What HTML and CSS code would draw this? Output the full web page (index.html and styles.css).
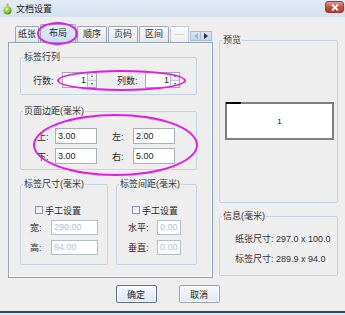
FILE: index.html
```html
<!DOCTYPE html>
<html>
<head>
<meta charset="utf-8">
<title>文档设置</title>
<link rel="stylesheet" href="styles.css">
</head>
<body>
<div class="window">
  <div class="titlebar">
    <svg class="app-icon" width="9" height="12" viewBox="0 0 9 12">
      <defs>
        <radialGradient id="g1" cx="0.4" cy="0.35" r="0.7">
          <stop offset="0" stop-color="#e6f7a0"/>
          <stop offset="0.5" stop-color="#8fcb2a"/>
          <stop offset="1" stop-color="#3f8a12"/>
        </radialGradient>
      </defs>
      <rect x="3.5" y="0.5" width="2" height="3" fill="#d9b13a"/>
      <circle cx="4.5" cy="7.5" r="4" fill="url(#g1)"/>
    </svg>
    <span class="title">文档设置</span>
    <div class="close">
      <svg width="8" height="7" viewBox="0 0 8 7"><path d="M1 0.5 L7 6.5 M7 0.5 L1 6.5" stroke="#fff" stroke-width="1.8"/></svg>
    </div>
  </div>

  <div class="content">
    <div class="left">
      <div class="tabs">
        <div class="tab tab-first">纸张</div>
        <div class="tab active">布局</div>
        <div class="tab">顺序</div>
        <div class="tab">页码</div>
        <div class="tab">区间</div>
        <div class="tab more">—</div>
        <div class="tab-arrows">
          <span class="arr">
            <svg width="4" height="6" viewBox="0 0 4 6"><path d="M4 0 L0 3 L4 6Z" fill="#a7b3c4"/></svg>
          </span>
          <span class="arr">
            <svg width="4" height="6" viewBox="0 0 4 6"><path d="M0 0 L4 3 L0 6Z" fill="#2b2b2b"/></svg>
          </span>
        </div>
      </div>
      <div class="panel">
        <fieldset class="fs fs-rc">
          <legend>标签行列</legend>
          <div class="rc-row">
            <span class="lbl">行数:</span>
            <div class="spinner"><span class="val">1</span><div class="spin"><i class="up"></i><i class="dn"></i></div></div>
            <span class="lbl lbl-col">列数:</span>
            <div class="spinner"><span class="val">1</span><div class="spin"><i class="up"></i><i class="dn"></i></div></div>
          </div>
        </fieldset>

        <fieldset class="fs fs-margin">
          <legend>页面边距(毫米)</legend>
          <div class="m-rows">
            <div class="m-row">
              <span class="m-lbl">上:</span><span class="inp">3.00</span>
              <span class="m-lbl m-lbl2">左:</span><span class="inp">2.00</span>
            </div>
            <div class="m-row">
              <span class="m-lbl">下:</span><span class="inp">3.00</span>
              <span class="m-lbl m-lbl2">右:</span><span class="inp">5.00</span>
            </div>
          </div>
        </fieldset>

        <div class="pair">
          <fieldset class="fs fs-size">
            <legend>标签尺寸(毫米)</legend>
            <div class="chk-row"><span class="chk"></span><span>手工设置</span></div>
            <div class="d-row"><span class="d-lbl">宽:</span><span class="inp dis">290.00</span></div>
            <div class="d-row"><span class="d-lbl">高:</span><span class="inp dis">94.00</span></div>
          </fieldset>
          <fieldset class="fs fs-gap">
            <legend>标签间距(毫米)</legend>
            <div class="chk-row"><span class="chk"></span><span>手工设置</span></div>
            <div class="d-row"><span class="d-lbl">水平:</span><span class="inp dis">0.00</span></div>
            <div class="d-row"><span class="d-lbl">垂直:</span><span class="inp dis">0.00</span></div>
          </fieldset>
        </div>
      </div>
    </div>

    <div class="right">
      <fieldset class="fs fs-preview">
        <legend>预览</legend>
        <div class="preview"><span>1</span></div>
      </fieldset>
      <fieldset class="fs fs-info">
        <legend>信息(毫米)</legend>
        <div class="info-line">纸张尺寸: 297.0 x 100.0</div>
        <div class="info-line">标签尺寸: 289.9 x 94.0</div>
      </fieldset>
    </div>
  </div>

  <div class="buttons">
    <button class="btn btn-default">确定</button>
    <button class="btn">取消</button>
  </div>

  <div class="bottom-bar"></div>

  <div class="mark mark-tab"></div>
  <div class="mark mark-rc"></div>
  <div class="mark mark-margin"></div>
</div>
</body>
</html>
```

FILE: styles.css
```css
* { box-sizing: border-box; }

body {
  margin: 0;
  width: 345px;
  height: 315px;
  overflow: hidden;
  background: #eeeeee;
  font-family: "Liberation Sans", "Noto Sans CJK SC", sans-serif;
  font-size: 9px;
  color: #2a2a2a;
}

.window {
  position: relative;
  height: 315px;
  display: flex;
  flex-direction: column;
}

/* title bar */
.titlebar {
  height: 17px;
  display: flex;
  align-items: center;
  padding-left: 3px;
  background: linear-gradient(#e2ebf6, #d4e1f0);
}
.app-icon { display: block; }
.title { margin-left: 4px; font-size: 9px; color: #1b1b1b; }
.close {
  margin-left: auto;
  margin-right: 1px;
  width: 19px;
  height: 12px;
  border: 1px solid #9a3d33;
  border-radius: 3px;
  background: linear-gradient(#e49a8e, #c9493a 55%, #b83a2c);
  display: flex;
  align-items: center;
  justify-content: center;
  margin-top: -3px;
}
.close svg { display: block; }

/* content */
.content {
  display: flex;
  padding: 8px 7px 0 8px;
  gap: 6px;
}
.left { width: 205px; }

.tabs {
  height: 17px;
  display: flex;
  align-items: flex-end;
  padding-left: 7px;
}
.tab {
  height: 16px;
  line-height: 15px;
  padding: 0 5px;
  margin-right: 1px;
  border: 1px solid #9ba7b8;
  border-bottom: none;
  border-radius: 2px 2px 0 0;
  background: linear-gradient(#fafafa, #e6e6e6);
  white-space: nowrap;
}
.tab-first { padding: 0 2px; }
.tab.active {
  height: 18px;
  line-height: 17px;
  padding: 0 8px;
  background: linear-gradient(#e2eefa, #cadcf2);
  border-color: #8ea4c2;
}
.tab.more {
  width: 19px;
  padding: 0;
  text-align: center;
  color: #b5b5b5;
  background: linear-gradient(#fbfbfb, #efefef);
  border-color: #c3c9d2;
}
.tab-arrows {
  display: flex;
  margin-bottom: 1px;
}
.arr {
  width: 11px;
  height: 10px;
  border: 1px solid #a9bcd4;
  background: linear-gradient(#dbe6f3, #c3d4ea);
  display: flex;
  align-items: center;
  justify-content: center;
}
.arr + .arr { border-left: none; }
.arr svg { display: block; }

.panel {
  height: 236px;
  border: 1px solid #8aa3c3;
  box-shadow: inset 0 0 0 1px #f7f9fb;
  padding: 8px 15px 0 11px;
  display: flex;
  flex-direction: column;
}

/* fieldsets */
.fs {
  margin: 0;
  padding: 0 0 0 2px;
  min-width: 0;
  border: 1px solid #c3d3e6;
  border-radius: 2px;
}
.fs legend {
  padding: 0 1px;
  line-height: 13px;
  font-size: 9px;
  color: #333;
}

.fs-rc { height: 44px; }
.rc-row {
  display: flex;
  align-items: center;
  margin-top: 8px;
  padding-left: 10px;
}
.lbl { width: 29px; }
.lbl-col { margin-left: 20px; width: 28px; }
.spinner {
  width: 35px;
  height: 16px;
  border: 1px solid #9eaab8;
  background: #fff;
  display: flex;
}
.val {
  flex: 1;
  text-align: right;
  padding-right: 1px;
  line-height: 14px;
  font-size: 9px;
}
.spin {
  width: 9px;
  border-left: 1px solid #b7c1cd;
  display: flex;
  flex-direction: column;
}
.spin i {
  flex: 1;
  background: linear-gradient(#f6f8fb, #e3e9f1);
  position: relative;
}
.spin i + i { border-top: 1px solid #c5cdd8; }
.spin .up::after,
.spin .dn::after {
  content: "";
  position: absolute;
  left: 3px;
  width: 0;
  height: 0;
  border-left: 1.5px solid transparent;
  border-right: 1.5px solid transparent;
}
.spin .up::after { top: 2px; border-bottom: 2px solid #555; }
.spin .dn::after { top: 2px; border-top: 2px solid #555; }

.fs-margin { height: 65px; margin-top: 10px; }
.m-rows {
  margin-top: 10px;
  padding-left: 14px;
  display: flex;
  flex-direction: column;
  gap: 4px;
}
.m-row { display: flex; align-items: center; }
.m-lbl { width: 18px; }
.m-lbl2 { margin-left: 15px; width: 21px; }

.inp {
  width: 42px;
  height: 16px;
  line-height: 14px;
  border: 1px solid #a6afbb;
  background: #fff;
  padding-left: 2px;
  font-size: 9px;
  color: #222;
}

.pair {
  display: flex;
  gap: 8px;
  margin-top: 8px;
}
.fs-size { width: 88px; height: 87px; }
.fs-gap { width: 81px; height: 87px; }

.chk-row {
  display: flex;
  align-items: center;
  gap: 1px;
  margin-top: 14px;
  height: 10px;
}
.fs-size .chk-row { padding-left: 12px; }
.fs-gap .chk-row { padding-left: 13px; }
.chk {
  width: 8px;
  height: 8px;
  border: 1px solid #8697ad;
  background: linear-gradient(135deg, #dde4ee, #f9fbfd);
  margin-right: 1px;
}
.d-row {
  display: flex;
  align-items: center;
  margin-top: 5px;
}
.d-row + .d-row { margin-top: 5px; }
.fs-size .d-row { padding-left: 7px; }
.fs-size .d-lbl { width: 21px; }
.fs-size .inp { width: 47px; height: 15px; }
.fs-gap .d-row { padding-left: 9px; }
.fs-gap .d-lbl { width: 29px; }
.fs-gap .inp { width: 24px; height: 15px; }
.inp.dis { color: #b3c2d6; border-color: #b4bfcc; line-height: 13px; }

/* right column */
.right {
  width: 119px;
  margin-top: 9px;
  display: flex;
  flex-direction: column;
  gap: 7px;
}
.fs-preview { height: 169px; }
.preview {
  position: relative;
  margin: 55px 0 0 3px;
  width: 109px;
  height: 38px;
  border: 2px solid #7f7f7f;
  background: #fff;
  display: flex;
  align-items: center;
  justify-content: center;
  font-size: 8px;
  color: #111;
}
.preview::before {
  content: "";
  position: absolute;
  left: -1px;
  top: -2px;
  width: 15px;
  height: 2px;
  background: #000;
}
.fs-info { height: 66px; }
.info-line {
  padding-left: 13px;
  line-height: 13px;
  color: #333;
  white-space: nowrap;
}
.info-line:first-of-type { margin-top: 10px; }
.info-line + .info-line { margin-top: 7px; }

/* buttons */
.buttons {
  display: flex;
  justify-content: center;
  gap: 22px;
  padding-right: 10px;
  margin-top: 7px;
}
.btn {
  width: 41px;
  height: 18px;
  padding: 0;
  font-family: "Liberation Sans", "Noto Sans CJK SC", sans-serif;
  font-size: 9px;
  color: #222;
  border: 1px solid #9aa3ad;
  border-radius: 2px;
  background: linear-gradient(#f7f9fc, #dfe7f1);
  box-shadow: inset 0 0 0 1px #fbfcfe;
}
.btn-default { border-color: #5d6f86; }

.bottom-bar {
  margin-top: auto;
  height: 4px;
  border-top: 2px solid #274f63;
  background: #dfe7ee;
}

/* annotation ellipses */
.mark {
  position: absolute;
  border: 2px solid #e41be4;
  border-radius: 50%;
  pointer-events: none;
}
.mark-tab { left: 37px; top: 22px; width: 41px; height: 23px; }
.mark-rc { left: 57px; top: 70px; width: 129px; height: 21px; }
.mark-margin { left: 33px; top: 114px; width: 165px; height: 62px; }
```
